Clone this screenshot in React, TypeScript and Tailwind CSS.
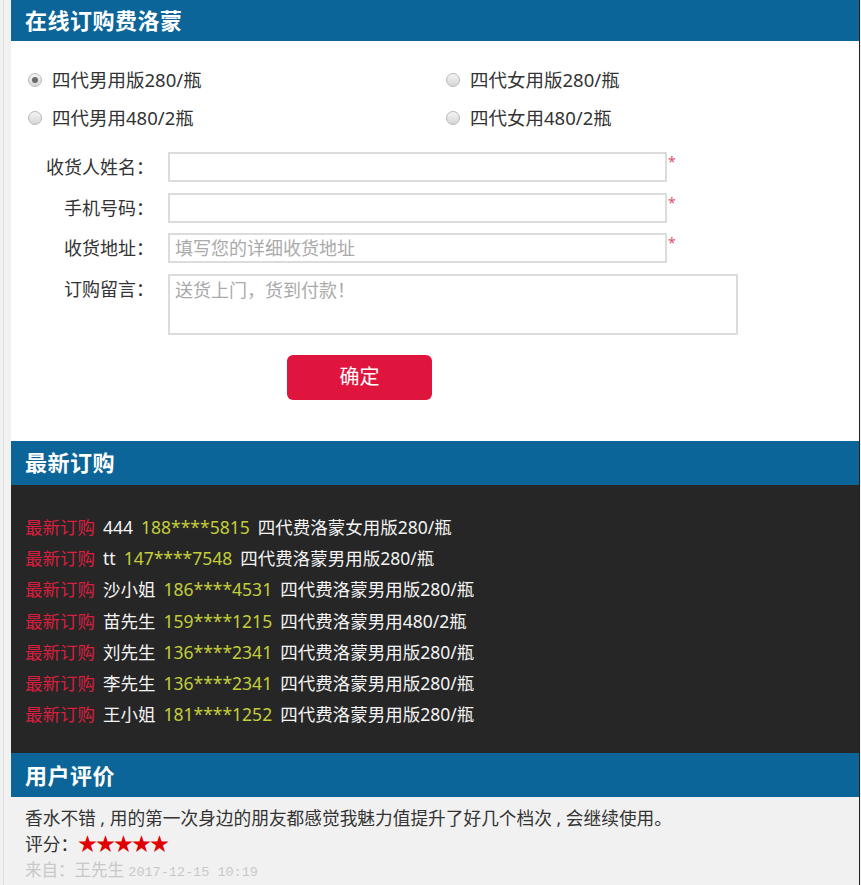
import React, { useState } from 'react';

type Order = {
  name: string;
  phone: string;
  item: string;
};

const PRODUCTS = [
  '四代男用版280/瓶',
  '四代女用版280/瓶',
  '四代男用480/2瓶',
  '四代女用480/2瓶',
];

const ORDERS: Order[] = [
  { name: '444', phone: '188****5815', item: '四代费洛蒙女用版280/瓶' },
  { name: 'tt', phone: '147****7548', item: '四代费洛蒙男用版280/瓶' },
  { name: '沙小姐', phone: '186****4531', item: '四代费洛蒙男用版280/瓶' },
  { name: '苗先生', phone: '159****1215', item: '四代费洛蒙男用480/2瓶' },
  { name: '刘先生', phone: '136****2341', item: '四代费洛蒙男用版280/瓶' },
  { name: '李先生', phone: '136****2341', item: '四代费洛蒙男用版280/瓶' },
  { name: '王小姐', phone: '181****1252', item: '四代费洛蒙男用版280/瓶' },
];

const font = "font-['Noto_Sans',_'Noto_Sans_CJK_SC',_sans-serif]";

function SectionTitle({ children }: { children: React.ReactNode }) {
  return (
    <div className="h-[44px] bg-[#0c6599] pl-[14px] flex items-center text-white text-[22px] font-bold tracking-[0.5px]">
      {children}
    </div>
  );
}

function Radio({ checked }: { checked: boolean }) {
  return (
    <span className="w-[14px] h-[14px] rounded-full border border-[#b8b8b8] bg-gradient-to-b from-[#f4f4f4] to-[#d6d6d6] flex items-center justify-center shrink-0">
      {checked && <span className="w-[6px] h-[6px] rounded-full bg-[#6a6a6a]" />}
    </span>
  );
}

function Field({
  label,
  placeholder,
  required,
}: {
  label: string;
  placeholder?: string;
  required?: boolean;
}) {
  return (
    <div className="flex items-start">
      <label className="w-[143px] text-right text-[18px] text-[#333] leading-[30px]">
        {label}
      </label>
      <input
        className="ml-[14px] w-[499px] h-[30px] border-2 border-[#dcdcdc] px-[5px] text-[18px] text-[#333] placeholder:text-[#aaa] outline-none"
        placeholder={placeholder}
      />
      {required && (
        <span className="ml-[1px] text-[#e0506e] text-[14px] leading-[20px]">*</span>
      )}
    </div>
  );
}

export default function App() {
  const [pick, setPick] = useState(0);

  return (
    <div className={`${font} min-h-[885px] flex bg-[#f1f1f1]`}>
      {/* left gutter */}
      <div className="w-[11px] shrink-0 pl-[3px]">
        <div className="w-px h-full bg-[#dedede]" />
      </div>

      <div className="w-[849px] shrink-0 border-r border-[#222] flex flex-col">
        {/* order form */}
        <div className="bg-white">
          <div className="h-[41px] bg-[#0c6599] pl-[14px] flex items-center text-white text-[22px] font-bold tracking-[0.5px]">
            在线订购费洛蒙
          </div>

          <div className="grid grid-cols-[418px_1fr] pl-[17px] pt-[20px]">
            {PRODUCTS.map((p, i) => (
              <button
                key={p}
                onClick={() => setPick(i)}
                className="h-[38px] flex items-center gap-[10px] text-[18.5px] text-[#333]"
              >
                <Radio checked={pick === i} />
                {p}
              </button>
            ))}
          </div>

          <div className="mt-[15px] flex flex-col gap-[10.67px]">
            <Field label="收货人姓名：" required />
            <Field label="手机号码：" required />
            <Field label="收货地址：" placeholder="填写您的详细收货地址" required />
            <div className="flex items-start">
              <label className="w-[143px] text-right text-[18px] text-[#333] leading-[30px]">
                订购留言：
              </label>
              <textarea
                className="ml-[14px] w-[570px] h-[61px] border-2 border-[#dcdcdc] px-[5px] py-[1px] text-[18px] leading-[26px] text-[#333] placeholder:text-[#aaa] outline-none resize-none"
                placeholder="送货上门，货到付款！"
              />
            </div>
          </div>

          <div className="pt-[20px] pb-[41px]">
            <button className="ml-[276px] w-[145px] h-[45px] rounded-[6px] bg-[#e0153e] text-white text-[20px]">
              确定
            </button>
          </div>
        </div>

        {/* latest orders */}
        <SectionTitle>最新订购</SectionTitle>
        <div className="bg-[#262626] pl-[14px] pt-[27px] pb-[23px] text-[17.5px] leading-[31.2px]">
          {ORDERS.map((o, i) => (
            <div key={i} className="flex gap-[8px] whitespace-nowrap">
              <span className="text-[#d81e3e]">最新订购</span>
              <span className="text-[#f4f4f4]">{o.name}</span>
              <span className="text-[#c3cd3b]">{o.phone}</span>
              <span className="text-[#f4f4f4]">{o.item}</span>
            </div>
          ))}
        </div>

        {/* reviews */}
        <SectionTitle>用户评价</SectionTitle>
        <div className="flex-1 bg-[#f1f1f1] pl-[14px] pt-[9px] text-[17.7px] leading-[25.5px] text-[#333]">
          <p>香水不错 , 用的第一次身边的朋友都感觉我魅力值提升了好几个档次 , 会继续使用。</p>
          <p className="flex items-center">
            评分：
            <span className="text-[#e00000] text-[19px] tracking-[-1px]">★★★★★</span>
          </p>
          <p className="text-[#c8c8c8] text-[16.5px]">
            来自：王先生{' '}
            <span className="font-['Liberation_Mono',_monospace] text-[13.5px]">2017-12-15 10:19</span>
          </p>
        </div>
      </div>
    </div>
  );
}
